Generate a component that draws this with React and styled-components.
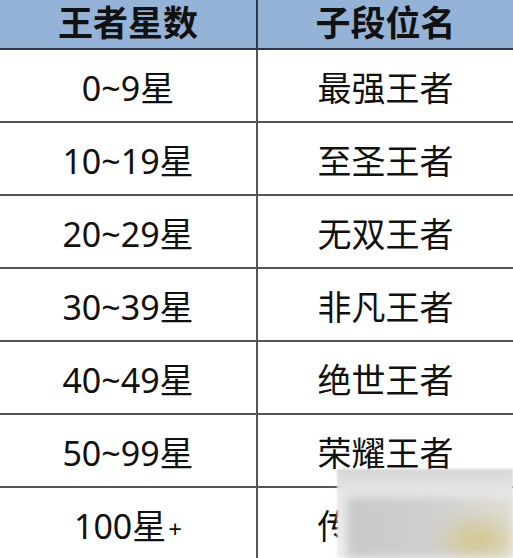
import React from 'react';
import styled, { createGlobalStyle } from 'styled-components';

const GlobalStyle = createGlobalStyle`
  html, body {
    margin: 0;
    padding: 0;
    background: #fff;
    overflow: hidden;
  }
  body {
    font-family: "Noto Sans", "Noto Sans CJK SC", sans-serif;
  }
`;

const Page = styled.div`
  position: relative;
  width: 513px;
  height: 558px;
  overflow: hidden;
  background: #fff;
`;

const Table = styled.div`
  display: grid;
  grid-template-columns: 258px 1fr;
  grid-auto-rows: 73px;
  grid-template-rows: 50px;
`;

const HeadCell = styled.div`
  display: flex;
  align-items: center;
  justify-content: center;
  padding-bottom: 7px;
  box-sizing: border-box;
  background: #95b3d7;
  color: #111;
  font-family: "Noto Sans CJK SC", sans-serif;
  font-size: 35px;
  line-height: 1;
  font-weight: 700;
  border-bottom: 2px solid #2f3640;
  border-right: ${p => (p.$first ? '2px solid #2d3b52' : 'none')};
`;

const Cell = styled.div`
  display: flex;
  align-items: center;
  justify-content: center;
  padding-top: 5px;
  box-sizing: border-box;
  color: #111;
  font-size: 34px;
  line-height: 1;
  font-weight: 400;
  border-bottom: 2px solid #555;
  border-right: ${p => (p.$first ? '2px solid #555' : 'none')};
`;

const Plus = styled.span`
  font-size: 24px;
  margin-left: 2px;
  transform: translateY(3px);
`;

const Mark = styled.div`
  position: absolute;
  left: 337px;
  top: 469px;
  width: 176px;
  height: 89px;
  background: linear-gradient(180deg, #d6d6d6 0%, #e9e9e9 30%, #efefef 100%);
  filter: blur(1px);
`;

const MarkInner = styled.div`
  position: absolute;
  left: 10px;
  top: 28px;
  right: 0;
  bottom: 0;
  background:
    radial-gradient(ellipse 48px 30px at 130px 42px, #d3c792 0%, rgba(211, 199, 146, 0.6) 45%, rgba(211, 199, 146, 0) 100%),
    linear-gradient(90deg, #c9c9c9 0%, #cfcfcf 50%, #e0ded2 100%);
  filter: blur(4px);
`;

const rows = [
  ['0~9星', '最强王者'],
  ['10~19星', '至圣王者'],
  ['20~29星', '无双王者'],
  ['30~39星', '非凡王者'],
  ['40~49星', '绝世王者'],
  ['50~99星', '荣耀王者'],
  ['100星', '传奇王者', true],
];

export default function App() {
  return (
    <Page>
      <GlobalStyle />
      <Table>
        <HeadCell $first>王者星数</HeadCell>
        <HeadCell>子段位名</HeadCell>
        {rows.map(([stars, name, plus]) => (
          <React.Fragment key={name}>
            <Cell $first>
              {stars}
              {plus && <Plus>+</Plus>}
            </Cell>
            <Cell>{name}</Cell>
          </React.Fragment>
        ))}
      </Table>
      <Mark>
        <MarkInner />
      </Mark>
    </Page>
  );
}
